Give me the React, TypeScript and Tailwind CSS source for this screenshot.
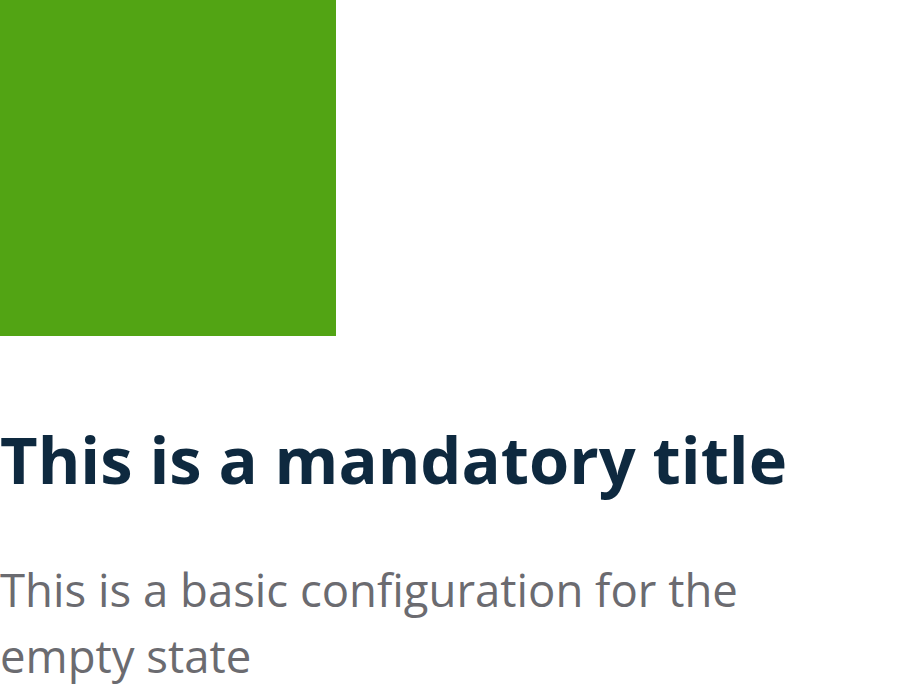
export default function App() {
  return (
    <div className="bg-white min-h-screen">
      <div className="w-[336px] h-[336px] bg-[#52a414]" />
      <h1 className="mt-[83px] text-[65px] leading-[80px] font-bold text-[#0e293f] font-['Open_Sans',sans-serif]">
        This is a mandatory title
      </h1>
      <p className="mt-[57px] w-[820px] text-[45.5px] leading-[66px] text-[#6b6b70] font-['Open_Sans',sans-serif]">
        This is a basic configuration for the empty state
      </p>
    </div>
  );
}
